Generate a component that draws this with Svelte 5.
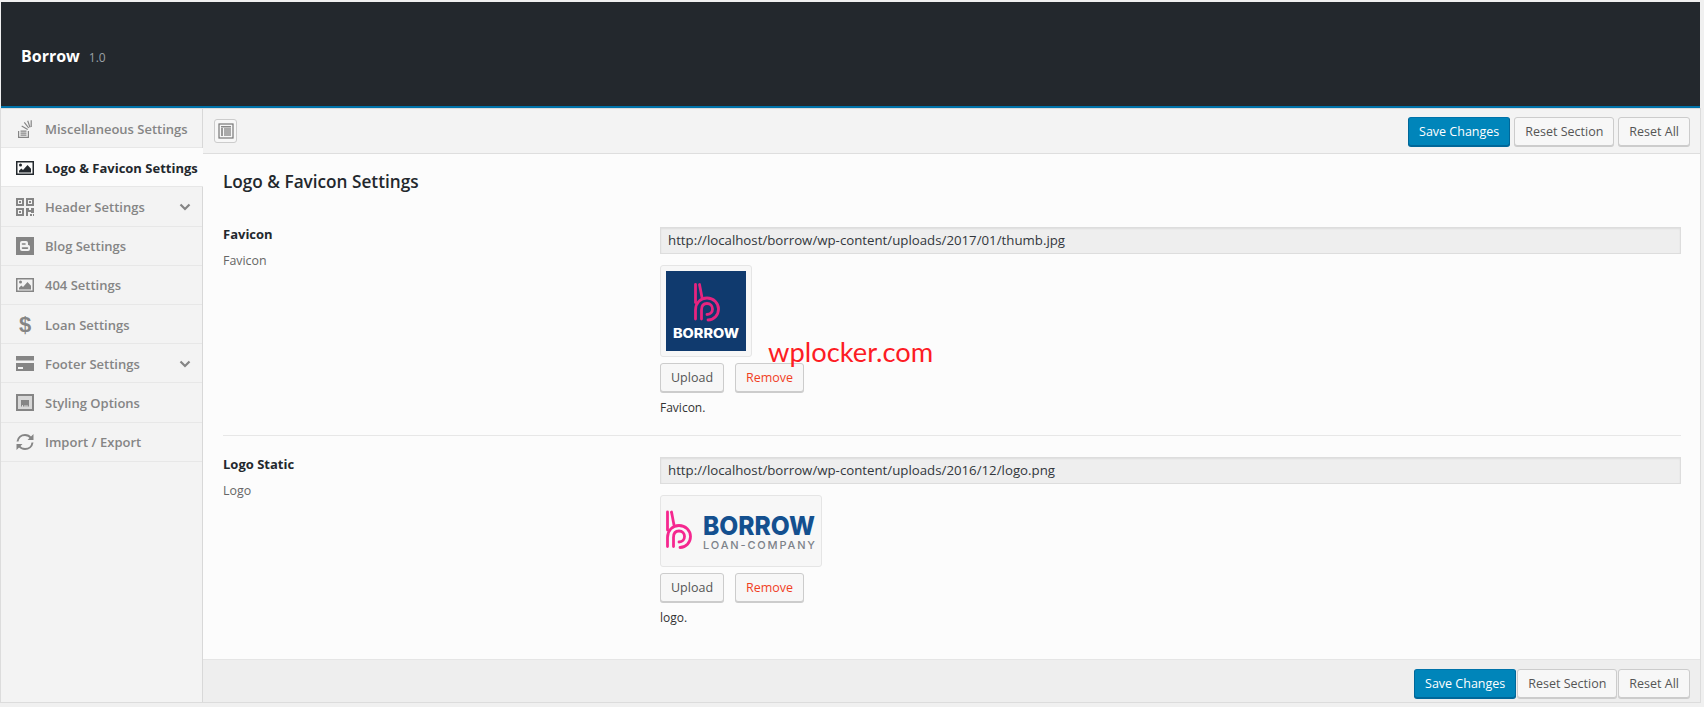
<script>
  const menu = [
    { label: 'Miscellaneous Settings', icon: 'stack' },
    { label: 'Logo & Favicon Settings', icon: 'picture', active: true },
    { label: 'Header Settings', icon: 'qr', arrow: true },
    { label: 'Blog Settings', icon: 'blog' },
    { label: '404 Settings', icon: 'picture' },
    { label: 'Loan Settings', icon: 'dollar' },
    { label: 'Footer Settings', icon: 'card', arrow: true },
    { label: 'Styling Options', icon: 'window' },
    { label: 'Import / Export', icon: 'refresh' }
  ];
</script>

{#snippet actions()}
  <button class="btn primary">Save Changes</button>
  <button class="btn">Reset Section</button>
  <button class="btn">Reset All</button>
{/snippet}

{#snippet mark(color)}
  <g fill="none" stroke={color} stroke-width="2.8" stroke-linecap="round">
    <path d="M1.500 1.500v18" />
    <path d="M5.500 1.500l2.500 13" />
    <path d="M1.500 36v-9c0-7 5-12 11.500-12s11.500 5 11.500 11-4.500 11-10.500 11" />
    <path d="M7.500 36v-9c0-4 2-6.500 5.500-6.500s5.500 2.500 5.500 5.500-2 5.500-5.500 5.500" />
  </g>
{/snippet}

<div class="page">
  <header class="top">
    <h1>Borrow</h1>
    <span class="version">1.0</span>
  </header>

  <div class="body">
    <nav class="side">
      {#each menu as item}
        <div class="item" class:active={item.active}>
          {#if item.icon === 'dollar'}
            <span class="icon dollar">$</span>
          {:else}
            <svg class="icon" viewBox="0 0 18 18" width="18" height="18">
              {#if item.icon === 'stack'}
                <g fill="none" stroke="currentColor" stroke-width="1.200">
                  <path d="M2.600 11v6.300h9.800V11" />
                  <path d="M4.500 11.200h6M4.500 13.200h6M4.500 15.200h6" />
                  <path d="M5.700 6l6 3.400M8.300 2.400l4.400 5.600M11.700 .8l2.300 6.600M15.200 .3v6.800" />
                </g>
              {:else if item.icon === 'picture'}
                <rect x="0.750" y="2.750" width="16.500" height="12.500" fill="none" stroke="currentColor" stroke-width="1.500" />
                <circle cx="4.500" cy="6" r="1.500" fill="currentColor" />
                <path d="M3 13.500v-1.800l2.400-2.100 1.600 1.500L11.500 6l3.500 3.700v3.800z" fill="currentColor" />
              {:else if item.icon === 'qr'}
                <path fill="currentColor" fill-rule="evenodd" d="M0 0h8v8H0zM2 2v4h4V2zM10 0h8v8h-8zM12 2v4h4V2zM0 10h8v8H0zM2 12v4h4v-4zM3 3h2v2H3zM13 3h2v2h-2zM3 13h2v2H3zM10 10h3v2h2v-2h3v5h-3v-1h-3v4h-2zM14 16h2v2h-2zM17 16h1v2h-1z" />
              {:else if item.icon === 'blog'}
                <path fill="currentColor" fill-rule="evenodd" d="M0 0h18v18H0zM6 4a2 2 0 0 0-2 2v6a2 2 0 0 0 2 2h6a2 2 0 0 0 2-2V9.500a1.500 1.500 0 0 0-1.500-1.500h-.5V6a2 2 0 0 0-2-2zM6.500 6.200h2.500a.8.8 0 0 1 0 1.600H6.500a.8.8 0 0 1 0-1.600zM6.500 10.300h5a.8.8 0 0 1 0 1.600h-5a.8.8 0 0 1 0-1.600z" />
              {:else if item.icon === 'card'}
                <path fill="currentColor" fill-rule="evenodd" d="M0 1h18v4.500H0zM0 8h18v8H0zM2 12v2h5v-2z" />
              {:else if item.icon === 'window'}
                <path fill="currentColor" fill-rule="evenodd" d="M0 0h18v17H0zM2 2v13h14V2z" />
                <path fill="currentColor" opacity="0.250" d="M2 2h14v13H2z" />
                <path fill="currentColor" fill-rule="evenodd" d="M5 6h8v6.500h-1.500V11h-1v1.500H9.500V11h-1v1.500H7V11H6v1.500H5z" />
              {:else if item.icon === 'refresh'}
                <g fill="none" stroke="currentColor" stroke-width="2">
                  <path d="M1.500 8.500C2 4.500 5.300 2 9 2c2.500 0 4.500 1 6 3" />
                  <path d="M16.500 9.500C16 13.500 12.700 16 9 16c-2.500 0-4.500-1-6-3" />
                </g>
                <path fill="currentColor" d="M17.500 1v6h-6zM.5 17v-6h6z" />
              {/if}
            </svg>
          {/if}
          <span class="label">{item.label}</span>
          {#if item.arrow}
            <svg class="arrow" viewBox="0 0 12 8" width="12" height="8">
              <path d="M1.500 1.500L6 6l4.500-4.500" fill="none" stroke="currentColor" stroke-width="2.200" />
            </svg>
          {/if}
        </div>
      {/each}
    </nav>

    <main class="main">
      <div class="bar">
        <span class="expand">
          <svg viewBox="0 0 16 16" width="16" height="16">
            <rect x="1" y="1" width="14" height="14" fill="none" stroke="#777" stroke-width="1.200" />
            <rect x="3" y="3" width="10" height="1.500" fill="#888" />
            <rect x="3" y="5" width="2" height="8" fill="#999" />
            <rect x="6" y="5" width="7" height="8" fill="#aaa" />
          </svg>
        </span>
        <div class="actions">{@render actions()}</div>
      </div>

      <section class="content">
        <h2>Logo &amp; Favicon Settings</h2>

        <div class="row first">
          <div class="info">
            <h3>Favicon</h3>
            <p>Favicon</p>
          </div>
          <div class="field">
            <div class="url">http://localhost/borrow/wp-content/uploads/2017/01/thumb.jpg</div>
            <div class="thumb square">
              <svg viewBox="0 0 80 80" width="80" height="80">
                <rect width="80" height="80" fill="#103a6e" />
                <g transform="translate(28 12)">{@render mark('#e6247f')}</g>
                <text x="7" y="67" textLength="66" lengthAdjust="spacingAndGlyphs" class="thumb-word">BORROW</text>
              </svg>
            </div>
            <div class="buttons">
              <button class="btn">Upload</button>
              <button class="btn remove">Remove</button>
            </div>
            <p class="desc">Favicon.</p>
          </div>
        </div>

        <div class="row">
          <div class="info">
            <h3>Logo Static</h3>
            <p>Logo</p>
          </div>
          <div class="field">
            <div class="url">http://localhost/borrow/wp-content/uploads/2016/12/logo.png</div>
            <div class="thumb wide">
              <svg viewBox="0 0 150 60" width="150" height="60">
                <g transform="translate(0 9.500)">{@render mark('#f5278f')}</g>
                <text x="37" y="34" textLength="112" lengthAdjust="spacingAndGlyphs" class="logo-word">BORROW</text>
                <text x="37" y="48" textLength="112" class="logo-sub">LOAN-COMPANY</text>
              </svg>
            </div>
            <div class="buttons">
              <button class="btn">Upload</button>
              <button class="btn remove">Remove</button>
            </div>
            <p class="desc">logo.</p>
          </div>
        </div>
      </section>

      <div class="bar bottom">
        <div class="actions">{@render actions()}</div>
      </div>
    </main>
  </div>

  <span class="stamp">wplocker.com</span>
</div>

<style>
  :global(body) {
    margin: 0;
    background: #f0f0f0;
  }

  .page {
    position: relative;
    box-sizing: border-box;
    width: 1704px;
    height: 707px;
    padding: 2px 4px 0 1px;
    font-family: "Open Sans", sans-serif;
    font-size: 13px;
    color: #333;
    overflow: hidden;
  }

  .top {
    box-sizing: border-box;
    height: 107px;
    background: #23282d;
    border-bottom: 3px solid #0073aa;
    display: flex;
    align-items: baseline;
    padding: 44px 20px 0;
    color: #fff;
  }

  h1 {
    margin: 0;
    font-size: 16px;
    font-weight: 700;
    line-height: 20px;
  }

  .version {
    margin-left: 9px;
    font-size: 12px;
    color: #9aa0a5;
  }

  .body {
    display: flex;
    height: 593px;
    box-shadow: 0 0 0 1px #dcdcdc;
  }

  .side {
    width: 201px;
    flex-shrink: 0;
    background: #f3f3f3;
    border-right: 1px solid #d8d8d8;
  }

  .item {
    box-sizing: border-box;
    height: 39.200px;
    display: flex;
    align-items: center;
    padding: 1px 11px 0 15px;
    background: #f3f3f3;
    border-bottom: 1px solid #e7e7e7;
    color: #858585;
    font-weight: 600;
    font-size: 13px;
  }

  .item.active {
    background: #fcfcfc;
    color: #23282d;
    font-weight: 700;
    width: 202px;
    position: relative;
  }

  .icon {
    flex-shrink: 0;
    margin-right: 11px;
  }

  .dollar {
    width: 18px;
    text-align: center;
    font-family: "Liberation Sans", sans-serif;
    font-weight: 700;
    font-size: 22px;
    line-height: 22px;
  }

  .label {
    flex: 1;
    white-space: nowrap;
  }

  .main {
    flex: 1;
    display: flex;
    flex-direction: column;
    min-width: 0;
    background: #fcfcfc;
  }

  .bar {
    box-sizing: border-box;
    height: 45px;
    display: flex;
    align-items: center;
    justify-content: space-between;
    padding: 0 10px 0 11px;
    background: #f3f3f3;
    border-bottom: 1px solid #dedede;
  }

  .bar.bottom {
    margin-top: auto;
    height: 43px;
    align-items: flex-start;
    justify-content: flex-end;
    padding-top: 9px;
    background: #eee;
    border-bottom: 0;
    border-top: 1px solid #e5e5e5;
  }

  .bar.bottom .actions {
    gap: 1px;
  }

  .expand {
    box-sizing: border-box;
    width: 23px;
    height: 24px;
    display: flex;
    align-items: center;
    justify-content: center;
    background: #f7f7f7;
    border: 1px solid #ccc;
    border-radius: 3px;
  }

  .actions {
    display: flex;
    gap: 4px;
  }

  .btn {
    box-sizing: border-box;
    height: 29px;
    padding: 0 10px;
    font-family: inherit;
    font-size: 12.500px;
    color: #555;
    background: #f7f7f7;
    border: 1px solid #ccc;
    border-radius: 3px;
    box-shadow: 0 1px 0 #ccc;
  }

  .btn.primary {
    color: #fff;
    background: #0085ba;
    border-color: #0073aa #006799 #006799;
    box-shadow: 0 1px 0 #006799;
  }

  .btn.remove {
    color: #f1401f;
  }

  .content {
    padding: 0 19px 0 20px;
  }

  h2 {
    margin: 0;
    padding-top: 17px;
    font-size: 17.200px;
    line-height: 22px;
    font-weight: 600;
    color: #23282d;
  }

  .row {
    display: flex;
    padding: 21px 0 0;
  }

  .row.first {
    margin-top: 34px;
    padding: 0 0 18px;
    border-bottom: 1px solid #e7e7e7;
  }

  .info {
    width: 437px;
    flex-shrink: 0;
  }

  h3 {
    margin: 0;
    font-size: 13px;
    line-height: 15px;
    font-weight: 700;
    color: #23282d;
  }

  .info p {
    margin: 10px 0 0;
    font-size: 12.400px;
    line-height: 18px;
    color: #666;
  }

  .field {
    flex: 1;
    min-width: 0;
  }

  .url {
    box-sizing: border-box;
    height: 27px;
    padding: 0 7px;
    line-height: 25px;
    font-size: 13.250px;
    color: #32373c;
    background: #eee;
    border: 1px solid #ddd;
    box-shadow: inset 0 1px 2px rgba(0, 0, 0, 0.07);
  }

  .thumb {
    box-sizing: border-box;
    margin-top: 11px;
    padding: 5px;
    background: #f7f7f7;
    border: 1px solid #e5e5e5;
    border-radius: 3px;
    display: flex;
  }

  .thumb.square {
    width: 92px;
    height: 92px;
  }

  .thumb.wide {
    width: 162px;
    height: 72px;
  }

  .thumb-word {
    font-family: "Inter", sans-serif;
    font-weight: 800;
    font-size: 13px;
    fill: #fff;
  }

  .logo-word {
    font-family: "Inter", sans-serif;
    font-weight: 800;
    font-size: 26px;
    fill: #14508f;
  }

  .logo-sub {
    font-family: "Inter", sans-serif;
    font-weight: 500;
    font-size: 11px;
    fill: #7d8289;
  }

  .buttons {
    margin-top: 6px;
    display: flex;
    gap: 11px;
  }

  .desc {
    margin: 7px 0 0;
    font-size: 12px;
    line-height: 18px;
    color: #333;
  }

  .stamp {
    position: absolute;
    left: 768px;
    top: 334px;
    font-family: "Lato", sans-serif;
    font-size: 27.300px;
    line-height: 36px;
    color: #fd1c24;
  }
</style>
